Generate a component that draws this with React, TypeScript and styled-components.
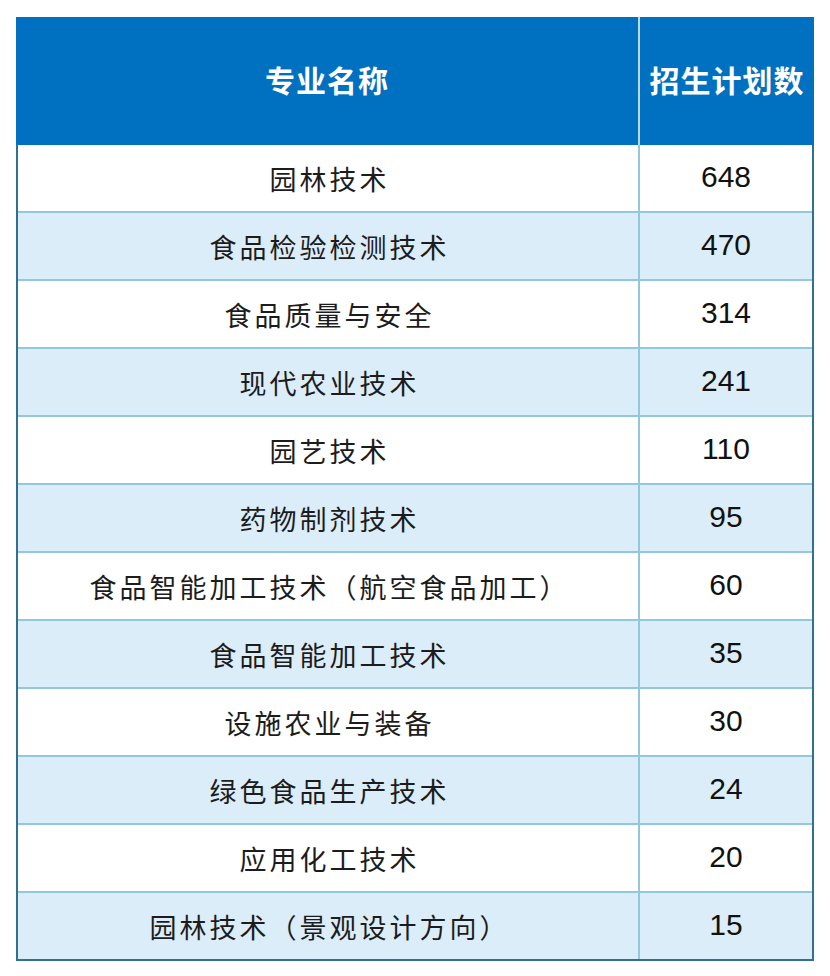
import React from "react";
import styled, { createGlobalStyle } from "styled-components";

const rows: [string, number][] = [
  ["园林技术", 648],
  ["食品检验检测技术", 470],
  ["食品质量与安全", 314],
  ["现代农业技术", 241],
  ["园艺技术", 110],
  ["药物制剂技术", 95],
  ["食品智能加工技术（航空食品加工）", 60],
  ["食品智能加工技术", 35],
  ["设施农业与装备", 30],
  ["绿色食品生产技术", 24],
  ["应用化工技术", 20],
  ["园林技术（景观设计方向）", 15],
];

const GlobalStyle = createGlobalStyle`
  body {
    margin: 0;
    background: #ffffff;
  }
`;

const Page = styled.div`
  padding: 17px 16px 0 16px;
  width: 830px;
  box-sizing: border-box;
`;

const Table = styled.div`
  width: 798px;
  display: flex;
  flex-direction: column;
`;

const HeadRow = styled.div`
  display: grid;
  grid-template-columns: 622px 176px;
  height: 128px;
  background: #0070c0;
`;

const HeadCell = styled.div<{ divider?: boolean }>`
  display: flex;
  align-items: center;
  justify-content: center;
  color: #ffffff;
  font-family: "Noto Sans CJK SC", sans-serif;
  font-weight: 700;
  font-size: 30px;
  letter-spacing: 1px;
  padding-bottom: 4px;
  border-left: ${(p) => (p.divider ? "2px solid #bcd9ee" : "none")};
`;

const Body = styled.div`
  border-left: 2px solid #2f7190;
  border-right: 2px solid #2f7190;
  border-bottom: 2px solid #2f7190;
`;

const Row = styled.div<{ shaded: boolean }>`
  display: grid;
  grid-template-columns: 620px 174px;
  height: 66px;
  background: ${(p) => (p.shaded ? "#dcedfa" : "#ffffff")};
  & + & {
    border-top: 2px solid #93c7dc;
  }
`;

const NameCell = styled.div`
  display: flex;
  align-items: center;
  justify-content: center;
  font-family: "Noto Sans CJK SC", sans-serif;
  font-size: 27px;
  letter-spacing: 3px;
  color: #1c1c1c;
  padding-left: 3px;
`;

const NumCell = styled.div`
  display: flex;
  align-items: center;
  justify-content: center;
  border-left: 2px solid #93c7dc;
  font-family: "Liberation Sans", Arial, sans-serif;
  font-size: 30px;
  color: #111111;
  padding-bottom: 2px;
`;

export default function App() {
  return (
    <Page>
      <GlobalStyle />
      <Table>
        <HeadRow>
          <HeadCell>专业名称</HeadCell>
          <HeadCell divider>招生计划数</HeadCell>
        </HeadRow>
        <Body>
          {rows.map(([name, count], i) => (
            <Row key={name + i} shaded={i % 2 === 1}>
              <NameCell>{name}</NameCell>
              <NumCell>{count}</NumCell>
            </Row>
          ))}
        </Body>
      </Table>
    </Page>
  );
}
